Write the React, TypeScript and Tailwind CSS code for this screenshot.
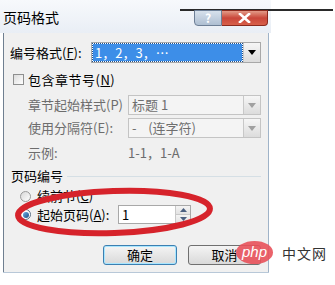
const font = 'font-["SimSun","Noto_Sans_CJK_SC",sans-serif]';

function DropArrow({ disabled }: { disabled?: boolean }) {
  return (
    <div className="w-[17px] h-full flex items-center justify-center bg-gradient-to-b from-[#f6f6f6] to-[#dcdcdc] border-l border-[#c8c8c8]">
      <svg width="8" height="5" viewBox="0 0 8 5">
        <path d="M0 0 L8 0 L4 5 Z" fill={disabled ? '#a0a0a0' : '#000'} />
      </svg>
    </div>
  );
}

function Select({ text, disabled, selected }: { text: string; disabled?: boolean; selected?: boolean }) {
  return (
    <div className={`flex h-full border ${disabled ? 'border-[#c4c4c4] bg-[#f4f4f4]' : 'border-[#a8a8a8] bg-white'}`}>
      <div className="flex-1 flex items-center p-[1px]">
        <div
          className={`flex items-center h-full w-full pl-[2px] whitespace-pre ${
            selected ? 'bg-[#3d8ee8] text-white outline outline-1 outline-dotted outline-[#1b4f8f]' : disabled ? 'text-[#6f6f6f]' : 'text-black'
          }`}
        >
          {text}
        </div>
      </div>
      <DropArrow disabled={disabled} />
    </div>
  );
}

export default function App() {
  return (
    <div className={`relative w-[335px] h-[285px] bg-white overflow-hidden ${font}`}>
      {/* stray window edge */}
      <div className="absolute left-[180px] top-[9px] w-[153px] h-[2px] bg-[#2a2a2a]" />

      <div className="w-[271px] flex flex-col">
        {/* title bar */}
        <div className="h-[33px] flex items-start bg-gradient-to-b from-[#f7f9fc] to-[#e9eef5]">
          <div className="pl-[3px] pt-[9px] text-[14px] leading-[16px] text-black">页码格式</div>
          <div className="ml-auto mr-[3px] mt-[10px] flex relative z-10">
            <div className="w-[28px] h-[16px] rounded-bl-[4px] border border-[#6d7f96] bg-gradient-to-b from-[#d7e1ec] to-[#aebfd2] flex items-center justify-center text-white text-[12px] font-bold leading-none">
              ?
            </div>
            <div className="w-[46px] h-[16px] rounded-br-[4px] border border-l-0 border-[#8a2a1e] bg-gradient-to-b from-[#e29a88] via-[#c9463a] to-[#d8604a] flex items-center justify-center">
              <svg width="13" height="10" viewBox="0 0 13 10">
                <path d="M2 1 L11 9 M11 1 L2 9" stroke="#fff" strokeWidth="2.6" strokeLinecap="square" />
              </svg>
            </div>
          </div>
        </div>

        {/* body */}
        <div className="ml-[3px] mr-[2px] h-[239px] bg-[#f0f0f0] border-l border-[#6f7f90] border-r border-r-[#9fb3c8] flex flex-col pl-[6px] pr-[7px] text-[13px] text-black">
          <div className="mt-[9px] h-[21px] flex items-center">
            <div className="w-[81px] whitespace-nowrap">编号格式(<span className="underline">F</span>):</div>
            <div className="flex-1 h-full">
              <Select text="1，2，3，…" selected />
            </div>
          </div>

          <div className="mt-[8px] h-[17px] flex items-center">
            <div className="ml-[3px] w-[11px] h-[11px] border border-[#8e8f8f] bg-gradient-to-br from-[#dcdcdc] to-[#ffffff]" />
            <div className="ml-[4px] tracking-[0.5px]">包含章节号(<span className="underline">N</span>)</div>
          </div>

          <div className="mt-[7px] h-[20px] flex items-center pl-[18px] text-[#6d6d6d]">
            <div className="w-[100px]">章节起始样式(P)</div>
            <div className="flex-1 h-full">
              <Select text="标题 1" disabled />
            </div>
          </div>

          <div className="mt-[3px] h-[20px] flex items-center pl-[18px] text-[#6d6d6d]">
            <div className="w-[100px]">使用分隔符(E):</div>
            <div className="flex-1 h-full">
              <Select text="-    (连字符)" disabled />
            </div>
          </div>

          <div className="mt-[7px] h-[16px] flex items-center pl-[18px] text-[#6d6d6d]">
            <div className="w-[100px]">示例:</div>
            <div>1-1，1-A</div>
          </div>

          <div className="mt-[7px] h-[16px] flex items-center">
            <div className="ml-[1px]">页码编号</div>
            <div className="flex-1 ml-[4px] h-px bg-[#d5dfe5]" />
          </div>

          <div className="mt-[5px] h-[14px] flex items-center pl-[10px]">
            <div className="w-[11px] h-[11px] rounded-full border border-[#9a9a9a] bg-gradient-to-br from-[#d8d8d8] to-white" />
            <div className="ml-[6px]">续前节(<span className="underline">C</span>)</div>
          </div>

          <div className="mt-[2px] h-[19px] flex items-center pl-[10px]">
            <div className="w-[11px] h-[11px] rounded-full border border-[#5a6f86] bg-white flex items-center justify-center">
              <div className="w-[6px] h-[6px] rounded-full bg-gradient-to-br from-[#6fb0e8] to-[#1c4f86]" />
            </div>
            <div className="ml-[6px] w-[81px]">起始页码(<span className="underline">A</span>):</div>
            <div className="w-[73px] h-full flex border border-[#a8a8a8] bg-white">
              <div className="flex-1 pl-[3px] flex items-center">1</div>
              <div className="w-[15px] flex flex-col border-l border-[#c8c8c8]">
                <div className="flex-1 flex items-center justify-center bg-gradient-to-b from-[#f4f4f4] to-[#e2e2e2]">
                  <svg width="7" height="4" viewBox="0 0 7 4"><path d="M0 4 L7 4 L3.5 0 Z" fill="#4a5f80" /></svg>
                </div>
                <div className="flex-1 flex items-center justify-center bg-gradient-to-b from-[#f4f4f4] to-[#e2e2e2] border-t border-[#c8c8c8]">
                  <svg width="7" height="4" viewBox="0 0 7 4"><path d="M0 0 L7 0 L3.5 4 Z" fill="#4a5f80" /></svg>
                </div>
              </div>
            </div>
          </div>

          <div className="mt-[21px] h-[20px] flex gap-[11px] justify-end">
            <div className="w-[74px] h-full rounded-[3px] border border-[#3c7fb1] shadow-[inset_0_0_0_1px_#a8e6ff] bg-gradient-to-b from-[#f4f4f4] to-[#d9d9d9] flex items-center justify-center">
              确定
            </div>
            <div className="w-[73px] h-full rounded-[3px] border border-[#707070] bg-gradient-to-b from-[#f4f4f4] to-[#d9d9d9] flex items-center justify-center">
              取消
            </div>
          </div>
        </div>
        <div className="ml-[3px] mr-[2px] h-[1px] bg-[#b8c8d8]" />
      </div>

      {/* hand-drawn red circle */}
      <svg className="absolute left-0 top-0" width="335" height="285" viewBox="0 0 335 285">
        <ellipse cx="114" cy="212" rx="96" ry="21" fill="none" stroke="#d6232b" strokeWidth="6" transform="rotate(-2 114 212)" />
      </svg>

      {/* watermark */}
      <div className="absolute left-[236px] top-[241px] flex items-center">
        <div className="w-[37px] h-[23px] rounded-[50%] bg-[#e8515a]/90 flex items-center justify-center">
          <span className="text-white italic text-[15px] leading-none font-['Liberation_Sans',sans-serif] -mt-[2px]">php</span>
        </div>
        <div className="ml-[9px] text-[14px] text-[#333] font-['Noto_Sans_CJK_SC',sans-serif] leading-none tracking-[1px]">中文网</div>
      </div>
    </div>
  );
}
